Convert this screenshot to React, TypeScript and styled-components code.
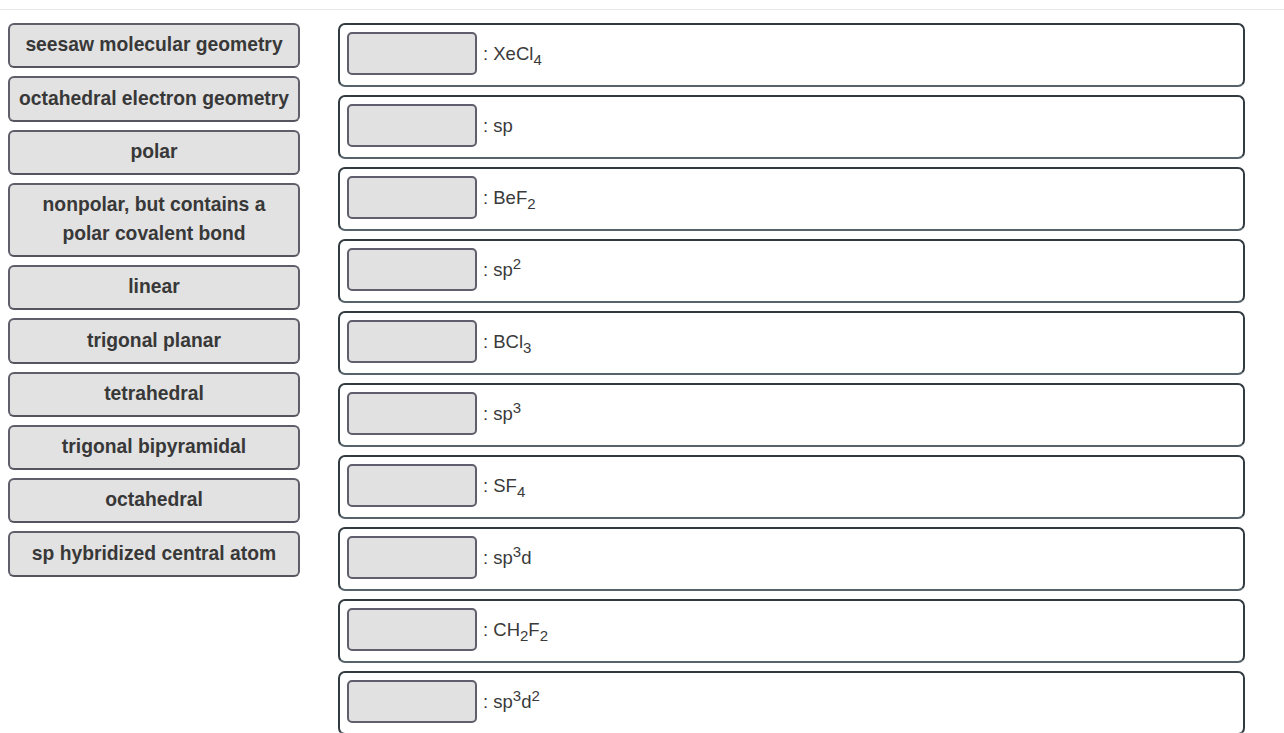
import React from "react";
import styled, { createGlobalStyle } from "styled-components";

const Global = createGlobalStyle`
  html, body { margin: 0; padding: 0; background: #ffffff; }
  body { font-family: "Liberation Sans", Arial, sans-serif; color: #333333; }
`;

const TopRule = styled.div`
  height: 9px;
  border-bottom: 1px solid #e6e6e6;
`;

const Board = styled.div`
  display: flex;
  align-items: flex-start;
  gap: 38px;
  padding: 13px 0 0 8px;
`;

const Bank = styled.div`
  width: 292px;
  display: flex;
  flex-direction: column;
  gap: 8px;
  flex: none;
`;

const Chip = styled.div`
  box-sizing: border-box;
  border: 2px solid #5f5e6b;
  border-bottom-color: #55545f;
  border-radius: 6px;
  background: #e2e2e2;
  padding: 6.25px 2px;
  font-size: 19.3px;
  line-height: 28.8px;
  font-weight: 700;
  color: #383838;
  text-align: center;
  white-space: nowrap;
`;

const Targets = styled.div`
  width: 907px;
  display: flex;
  flex-direction: column;
  gap: 8px;
  flex: none;
`;

const TargetRow = styled.div`
  box-sizing: border-box;
  display: flex;
  align-items: center;
  gap: 6px;
  border: 2px solid #313b3f;
  border-bottom-color: #56646a;
  border-radius: 7px;
  padding: 7px 7px 10px 7px;
  background: #ffffff;
`;

const Slot = styled.div`
  box-sizing: border-box;
  width: 130px;
  height: 43px;
  border: 2px solid #5f5e6c;
  border-radius: 5px;
  background: #e1e1e1;
  flex: none;
`;

const Label = styled.span`
  font-size: 18.5px;
  line-height: 22px;
  color: #3a3a3a;
`;

const Sub = styled.sub`
  font-size: 15px;
  line-height: 0;
  vertical-align: -5px;
`;

const Sup = styled.sup`
  font-size: 15px;
  line-height: 0;
  vertical-align: 7px;
`;

const chips = [
  "seesaw molecular geometry",
  "octahedral electron geometry",
  "polar",
  "nonpolar, but contains a polar covalent bond",
  "linear",
  "trigonal planar",
  "tetrahedral",
  "trigonal bipyramidal",
  "octahedral",
  "sp hybridized central atom",
];

const targets: React.ReactNode[] = [
  <>XeCl<Sub>4</Sub></>,
  <>sp</>,
  <>BeF<Sub>2</Sub></>,
  <>sp<Sup>2</Sup></>,
  <>BCl<Sub>3</Sub></>,
  <>sp<Sup>3</Sup></>,
  <>SF<Sub>4</Sub></>,
  <>sp<Sup>3</Sup>d</>,
  <>CH<Sub>2</Sub>F<Sub>2</Sub></>,
  <>sp<Sup>3</Sup>d<Sup>2</Sup></>,
];

export default function App() {
  return (
    <>
      <Global />
      <TopRule />
      <Board>
        <Bank>
          {chips.map((c) => (
            <Chip key={c}>{c === "nonpolar, but contains a polar covalent bond" ? <>nonpolar, but contains a<br />polar covalent bond</> : c}</Chip>
          ))}
        </Bank>
        <Targets>
          {targets.map((t, i) => (
            <TargetRow key={i}>
              <Slot />
              <Label>: {t}</Label>
            </TargetRow>
          ))}
        </Targets>
      </Board>
    </>
  );
}
